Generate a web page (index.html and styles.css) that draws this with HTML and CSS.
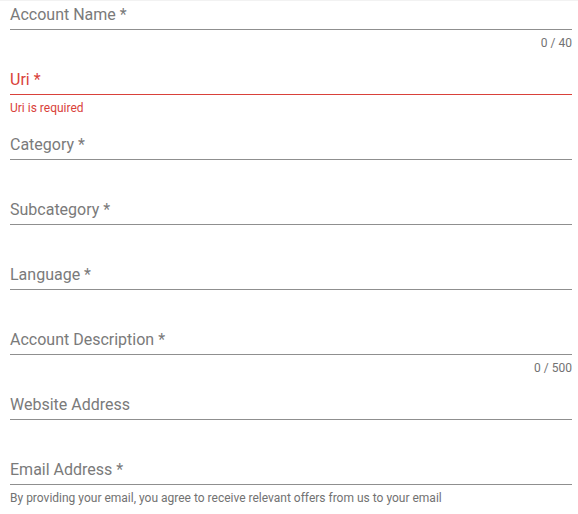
FILE: index.html
```html
<!DOCTYPE html>
<html>
<head>
<meta charset="utf-8">
<link rel="stylesheet" href="styles.css">
</head>
<body>
<form class="form">
  <div class="field">
    <div class="control"><span class="label">Account Name *</span></div>
    <div class="sub"><span></span><span class="count">0 / 40</span></div>
  </div>
  <div class="field invalid">
    <div class="control"><span class="label">Uri *</span></div>
    <div class="sub"><span class="error">Uri is required</span></div>
  </div>
  <div class="field">
    <div class="control"><span class="label">Category *</span></div>
    <div class="sub"></div>
  </div>
  <div class="field">
    <div class="control"><span class="label">Subcategory *</span></div>
    <div class="sub"></div>
  </div>
  <div class="field">
    <div class="control"><span class="label">Language *</span></div>
    <div class="sub"></div>
  </div>
  <div class="field">
    <div class="control"><span class="label">Account Description *</span></div>
    <div class="sub"><span></span><span class="count">0 / 500</span></div>
  </div>
  <div class="field">
    <div class="control"><span class="label">Website Address</span></div>
    <div class="sub"></div>
  </div>
  <div class="field">
    <div class="control"><span class="label">Email Address *</span></div>
    <div class="sub"><span class="hint">By providing your email, you agree to receive relevant offers from us to your email</span></div>
  </div>
</form>
</body>
</html>
```

FILE: styles.css
```css
html, body {
  margin: 0;
  padding: 0;
  background: #ffffff;
}
body {
  font-family: Roboto, "Noto Sans", sans-serif;
  border-top: 1px solid #f2f2f2;
}
.form {
  display: flex;
  flex-direction: column;
  padding: 0 6px 0 10px;
}
.field {
  display: flex;
  flex-direction: column;
  height: 65px;
}
.control {
  border-bottom: 1px solid #8f8f8f;
  display: flex;
  align-items: flex-end;
  padding-bottom: 5px;
  box-sizing: border-box;
  height: 29px;
}
.label {
  font-size: 16px;
  line-height: 19px;
  color: #7a7a7a;
}
.sub {
  display: flex;
  justify-content: space-between;
  font-size: 12px;
  line-height: 14px;
  padding-top: 6px;
}
.count {
  color: #727272;
}
.hint {
  color: #727272;
}
.invalid .control {
  border-bottom-color: #d9413a;
}
.invalid .label {
  color: #d9413a;
}
.error {
  color: #d9413a;
}
```
